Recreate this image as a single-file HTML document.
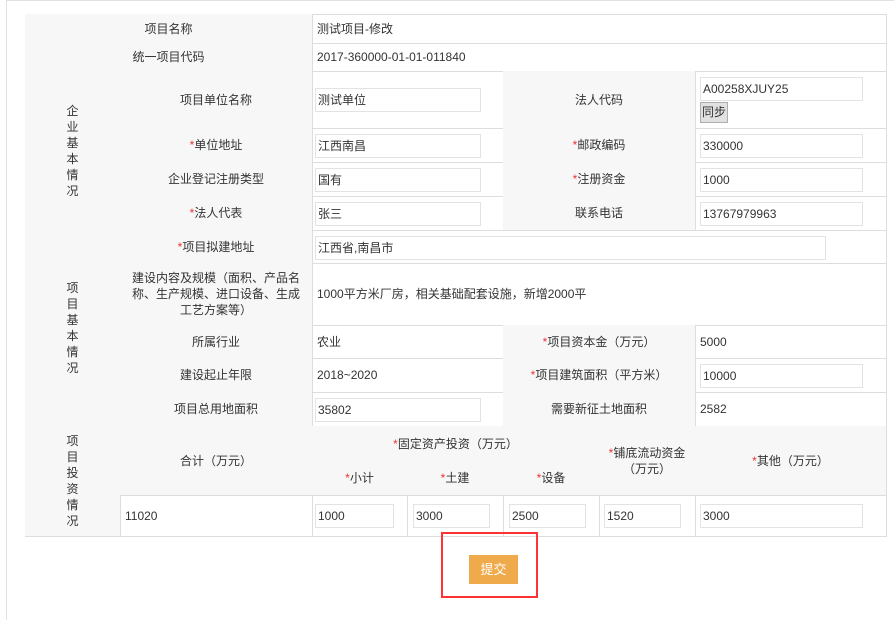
<!DOCTYPE html>
<html><head><meta charset="utf-8"><style>
*{margin:0;padding:0;box-sizing:border-box}
body{width:894px;height:599px;background:#fff;position:relative;overflow:hidden;font-family:"Liberation Sans","Noto Sans CJK SC",sans-serif;font-size:12px;color:#333}
.frame{position:absolute;left:6px;top:0;width:900px;height:620px;border-left:1px solid #e2e2e2;border-top:1px solid #e2e2e2}
.c{position:absolute;border-right:1px solid #ddd;border-bottom:1px solid #ddd;display:flex;align-items:center;justify-content:center;text-align:center;line-height:16px}
.g{background:#f7f7f7}
.l{justify-content:flex-start;padding-left:5px;text-align:left}
.v{flex-direction:column;line-height:16px}
.in{position:absolute;height:24px;border:1px solid #e3e3e3;background:#fff;padding-left:2px;line-height:22px;font-size:12px}
.r{color:#e33}
.tbl{position:absolute;left:25px;top:14px;width:862px;height:523px;border-left:1px solid #ddd;border-top:1px solid #ddd}
</style></head><body>
<div class="frame"></div>
<div class="tbl"></div>
<div class="c g" style="left:25px;top:14px;width:288px;height:30px">项目名称</div>
<div class="c l" style="left:312px;top:14px;width:575px;height:30px">测试项目-修改</div>
<div class="c g" style="left:25px;top:43px;width:288px;height:29px">统一项目代码</div>
<div class="c l" style="left:312px;top:43px;width:575px;height:29px">2017-360000-01-01-011840</div>

<div class="c g v" style="left:25px;top:71px;width:96px;height:160px"><span>企</span><span>业</span><span>基</span><span>本</span><span>情</span><span>况</span></div>
<div class="c g" style="left:120px;top:71px;width:193px;height:58px">项目单位名称</div>
<div class="c" style="left:312px;top:71px;width:192px;height:58px"></div>
<div class="c g" style="left:503px;top:71px;width:193px;height:58px">法人代码</div>
<div class="c" style="left:695px;top:71px;width:192px;height:58px"></div>

<div class="c g" style="left:120px;top:128px;width:193px;height:35px"><span><span class="r">*</span>单位地址</span></div>
<div class="c" style="left:312px;top:128px;width:192px;height:35px"></div>
<div class="c g" style="left:503px;top:128px;width:193px;height:35px"><span><span class="r">*</span>邮政编码</span></div>
<div class="c" style="left:695px;top:128px;width:192px;height:35px"></div>

<div class="c g" style="left:120px;top:162px;width:193px;height:35px">企业登记注册类型</div>
<div class="c" style="left:312px;top:162px;width:192px;height:35px"></div>
<div class="c g" style="left:503px;top:162px;width:193px;height:35px"><span><span class="r">*</span>注册资金</span></div>
<div class="c" style="left:695px;top:162px;width:192px;height:35px"></div>

<div class="c g" style="left:120px;top:196px;width:193px;height:35px"><span><span class="r">*</span>法人代表</span></div>
<div class="c" style="left:312px;top:196px;width:192px;height:35px"></div>
<div class="c g" style="left:503px;top:196px;width:193px;height:35px">联系电话</div>
<div class="c" style="left:695px;top:196px;width:192px;height:35px"></div>

<div class="c g v" style="left:25px;top:230px;width:96px;height:197px"><span>项</span><span>目</span><span>基</span><span>本</span><span>情</span><span>况</span></div>
<div class="c g" style="left:120px;top:230px;width:193px;height:34px"><span><span class="r">*</span>项目拟建地址</span></div>
<div class="c" style="left:312px;top:230px;width:575px;height:34px"></div>
<div class="c g" style="left:120px;top:263px;width:193px;height:63px;padding:0 8px">建设内容及规模（面积、产品名称、生产规模、进口设备、生成工艺方案等）</div>
<div class="c l" style="left:312px;top:263px;width:575px;height:63px">1000平方米厂房，相关基础配套设施，新增2000平</div>

<div class="c g" style="left:120px;top:325px;width:193px;height:34px">所属行业</div>
<div class="c l" style="left:312px;top:325px;width:192px;height:34px">农业</div>
<div class="c g" style="left:503px;top:325px;width:193px;height:34px"><span><span class="r">*</span>项目资本金（万元）</span></div>
<div class="c l" style="left:695px;top:325px;width:192px;height:34px">5000</div>

<div class="c g" style="left:120px;top:358px;width:193px;height:35px">建设起止年限</div>
<div class="c l" style="left:312px;top:358px;width:192px;height:35px">2018~2020</div>
<div class="c g" style="left:503px;top:358px;width:193px;height:35px"><span><span class="r">*</span>项目建筑面积（平方米）</span></div>
<div class="c" style="left:695px;top:358px;width:192px;height:35px"></div>

<div class="c g" style="left:120px;top:392px;width:193px;height:35px">项目总用地面积</div>
<div class="c" style="left:312px;top:392px;width:192px;height:35px"></div>
<div class="c g" style="left:503px;top:392px;width:193px;height:35px">需要新征土地面积</div>
<div class="c l" style="left:695px;top:392px;width:192px;height:35px">2582</div>

<div class="c g v" style="left:25px;top:426px;width:96px;height:111px"><span>项</span><span>目</span><span>投</span><span>资</span><span>情</span><span>况</span></div>
<div class="c g" style="left:120px;top:426px;width:193px;height:70px">合计（万元）</div>
<div class="c g" style="left:312px;top:426px;width:288px;height:36px"><span><span class="r">*</span>固定资产投资（万元）</span></div>
<div class="c g" style="left:312px;top:461px;width:96px;height:35px"><span><span class="r">*</span>小计</span></div>
<div class="c g" style="left:407px;top:461px;width:97px;height:35px"><span><span class="r">*</span>土建</span></div>
<div class="c g" style="left:503px;top:461px;width:97px;height:35px"><span><span class="r">*</span>设备</span></div>
<div class="c g" style="left:599px;top:426px;width:97px;height:70px;padding:0 4px"><span><span class="r">*</span>铺底流动资金（万元）</span></div>
<div class="c g" style="left:695px;top:426px;width:192px;height:70px"><span><span class="r">*</span>其他（万元）</span></div>

<div class="c l" style="left:120px;top:495px;width:193px;height:42px">11020</div>
<div class="c" style="left:312px;top:495px;width:96px;height:42px"></div>
<div class="c" style="left:407px;top:495px;width:97px;height:42px"></div>
<div class="c" style="left:503px;top:495px;width:97px;height:42px"></div>
<div class="c" style="left:599px;top:495px;width:97px;height:42px"></div>
<div class="c" style="left:695px;top:495px;width:192px;height:42px"></div>

<!-- inputs -->
<div class="in" style="left:315px;top:88px;width:166px">测试单位</div>
<div class="in" style="left:700px;top:77px;width:163px">A00258XJUY25</div>
<div style="position:absolute;left:700px;top:102px;width:28px;height:21px;background:#e1e1e1;border:1px solid #adadad;line-height:19px;text-align:center">同步</div>
<div class="in" style="left:315px;top:134px;width:166px">江西南昌</div>
<div class="in" style="left:700px;top:134px;width:163px">330000</div>
<div class="in" style="left:315px;top:168px;width:166px">国有</div>
<div class="in" style="left:700px;top:168px;width:163px">1000</div>
<div class="in" style="left:315px;top:202px;width:166px">张三</div>
<div class="in" style="left:700px;top:202px;width:163px">13767979963</div>
<div class="in" style="left:315px;top:236px;width:511px">江西省,南昌市</div>
<div class="in" style="left:700px;top:364px;width:163px">10000</div>
<div class="in" style="left:315px;top:398px;width:166px">35802</div>
<div class="in" style="left:315px;top:504px;width:79px">1000</div>
<div class="in" style="left:413px;top:504px;width:77px">3000</div>
<div class="in" style="left:509px;top:504px;width:77px">2500</div>
<div class="in" style="left:604px;top:504px;width:77px">1520</div>
<div class="in" style="left:700px;top:504px;width:163px">3000</div>

<div style="position:absolute;left:441px;top:532px;width:97px;height:66px;border:2px solid #f33"></div>
<div style="position:absolute;left:469px;top:555px;width:49px;height:29px;background:#efaa4b;color:#fff;font-size:13px;line-height:29px;text-align:center">提交</div>
</body></html>
